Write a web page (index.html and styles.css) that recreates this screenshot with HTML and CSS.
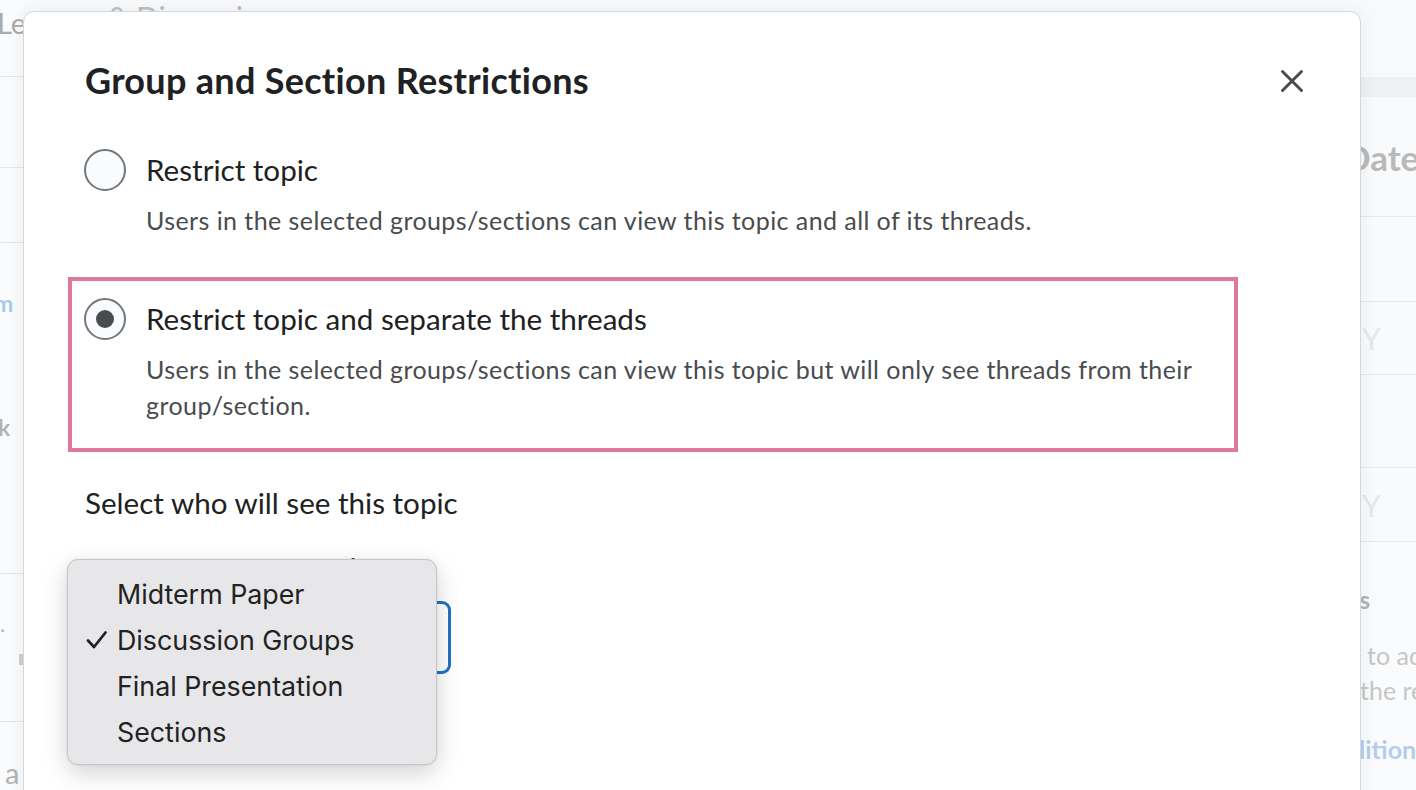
FILE: index.html
```html
<!DOCTYPE html>
<html lang="en">
<head>
<meta charset="utf-8">
<title>Group and Section Restrictions</title>
<link rel="stylesheet" href="styles.css">
</head>
<body>
<div class="page">
  <aside class="side-left">
    <div class="lrow lrow1"><span class="ghost-big">Le</span></div>
    <div class="lrow lrow2"></div>
    <div class="lrow lrow3"></div>
    <div class="lrow lrow4"><span class="ghost-link">m</span><span class="ghost-bold k">k</span></div>
    <div class="lrow lrow5"><span class="ghost-dot">.</span><span class="ghost-bar"></span></div>
    <div class="lrow lrow6"><span class="ghost-big a">a</span></div>
  </aside>
  <main class="page-main">
    <h1 class="ghost-heading">&amp; Discussions</h1>
  </main>
  <aside class="side-right">
    <div class="rtop"></div>
    <div class="rband"></div>
    <div class="rrow rhead"><span class="ghost-date">Date</span></div>
    <div class="rrow r2"></div>
    <div class="rrow r3"><span class="ghost-y">Y</span></div>
    <div class="rrow r4"></div>
    <div class="rrow r5"><span class="ghost-y">Y</span></div>
    <div class="rsection">
      <div class="ghost-sub">ns</div>
      <div class="ghost-p p1">to add</div>
      <div class="ghost-p p2">the re</div>
      <div class="ghost-l">lition</div>
    </div>
  </aside>
</div>

<div class="dialog" role="dialog" aria-labelledby="dlg-title">
  <div class="dialog-header">
    <h2 class="dialog-title" id="dlg-title">Group and Section Restrictions</h2>
    <button class="close-btn" aria-label="Close">
      <svg width="24" height="24" viewBox="0 0 24 24"><path d="M2.5 2.5 L21.5 21.5 M21.5 2.5 L2.5 21.5" stroke="#494c4e" stroke-width="3" stroke-linecap="round" fill="none"/></svg>
    </button>
  </div>
  <div class="options">
    <div class="option">
      <span class="radio"></span>
      <div class="option-body">
        <div class="option-label">Restrict topic</div>
        <div class="option-desc">Users in the selected groups/sections can view this topic and all of its threads.</div>
      </div>
    </div>
    <div class="option option-selected">
      <span class="radio radio-checked"><span class="radio-dot"></span></span>
      <div class="option-body">
        <div class="option-label">Restrict topic and separate the threads</div>
        <div class="option-desc">Users in the selected groups/sections can view this topic but will only see threads from their group/section.</div>
      </div>
    </div>
  </div>
  <p class="select-heading">Select who will see this topic</p>
  <div class="field-label">Group Category or Section</div>
  <div class="select-box"></div>
</div>

<div class="menu" role="listbox">
  <div class="menu-item"><span class="check"></span>Midterm Paper</div>
  <div class="menu-item"><span class="check"><svg width="22" height="20" viewBox="0 0 22 20"><path d="M2 10.5 L8 17 L19.5 2.5" stroke="#222" stroke-width="2.8" fill="none" stroke-linecap="round" stroke-linejoin="round"/></svg></span>Discussion Groups</div>
  <div class="menu-item"><span class="check"></span>Final Presentation</div>
  <div class="menu-item"><span class="check"></span>Sections</div>
</div>
</body>
</html>
```

FILE: styles.css
```css
* { box-sizing: border-box; }
html, body { margin: 0; padding: 0; }
body {
  width: 1416px;
  height: 790px;
  overflow: hidden;
  background: #f8f9fb;
  font-family: Lato, "Open Sans", sans-serif;
  position: relative;
}

/* ---------- faded page behind the dialog ---------- */
.page {
  display: flex;
  height: 790px;
  overflow: hidden;
}
.side-left {
  width: 23px;
  flex: none;
  overflow: hidden;
  background: #fafbfc;
}
.lrow {
  border-bottom: 1px solid #e4e6e9;
  position: relative;
  display: flex;
  flex-direction: column;
}
.lrow1 { height: 77px; }
.lrow2 { height: 91px; }
.lrow3 { height: 75px; }
.lrow4 { height: 331px; }
.lrow5 { height: 148px; }
.lrow6 { height: 68px; border-bottom: none; }
.ghost-big {
  font-size: 29px;
  color: #ababab;
  margin-left: -3px;
  margin-top: 6px;
  line-height: 34px;
}
.ghost-big.a { margin-left: 5px; margin-top: 34px; color: #b3b3b3; }
.ghost-link {
  font-size: 23px;
  font-weight: 700;
  color: #a9c8ec;
  margin-top: 45px;
  margin-left: -6px;
  line-height: 30px;
}
.ghost-bold.k {
  font-size: 23px;
  font-weight: 700;
  color: #b3b3b3;
  margin-top: 94px;
  margin-left: -2px;
  line-height: 30px;
}
.ghost-dot {
  font-size: 22px;
  color: #b8b8b8;
  margin-top: 38px;
  line-height: 24px;
}
.ghost-bar {
  width: 4px;
  height: 11px;
  background: #cfcfcf;
  margin-left: 19px;
  margin-top: 18px;
}

.page-main {
  flex: 1;
  padding-left: 84px;
}
.ghost-heading {
  margin: 0;
  font-size: 30px;
  font-weight: 400;
  color: #bdbdbd;
  line-height: 36px;
  margin-top: -1px;
}

.side-right {
  width: 116px;
  flex: none;
  overflow: hidden;
  display: flex;
  flex-direction: column;
}
.rtop { height: 77px; background: #f8f9fb; }
.rband { height: 20px; background: #eef0f3; }
.rrow {
  border-bottom: 1px solid #e4e6e9;
  display: flex;
  align-items: center;
  background: #f9fafc;
}
.rhead { height: 120px; }
.r2 { height: 85px; }
.r3 { height: 73px; }
.r4 { height: 93px; }
.r5 { height: 74px; }
.ghost-date {
  font-size: 35px;
  font-weight: 700;
  color: #b9b9b9;
  margin-left: 44px;
}
.ghost-y {
  font-size: 30px;
  color: #e6e7e9;
  margin-left: 62px;
}
.rsection {
  flex: 1;
  background: #fafbfc;
  position: relative;
  display: flex;
  flex-direction: column;
}
.ghost-sub {
  font-size: 24px;
  font-weight: 700;
  color: #b3b3b3;
  margin-left: 46px;
  margin-top: 43px;
  line-height: 30px;
}
.ghost-p {
  font-size: 25px;
  color: #c6c6c6;
  line-height: 35px;
  white-space: nowrap;
}
.p1 { margin-left: 67px; margin-top: 23px; }
.p2 { margin-left: 60px; margin-top: 0; }
.ghost-l {
  font-size: 25px;
  font-weight: 700;
  color: #b4cdee;
  margin-left: 59px;
  margin-top: 26px;
  line-height: 30px;
}

/* ---------- dialog ---------- */
.dialog {
  position: absolute;
  left: 23px;
  top: 11px;
  width: 1338px;
  height: 820px;
  background: #ffffff;
  border: 1px solid #d3d8df;
  border-radius: 11px;
  box-shadow: 0 2px 18px rgba(30, 40, 60, 0.07);
  padding: 48px 56px 0 59px;
}
.dialog-header {
  display: flex;
  align-items: center;
  justify-content: space-between;
}
.dialog-title {
  margin: 0 0 0 2px;
  font-size: 36px;
  line-height: 40px;
  font-weight: 700;
  color: #202122;
  letter-spacing: 0.3px;
}
.close-btn {
  width: 24px;
  height: 24px;
  padding: 0;
  border: none;
  background: none;
  display: flex;
  margin-top: 2px;
}

.options {
  margin-top: 28px;
  margin-left: -15px;
  width: 1170px;
  display: flex;
  flex-direction: column;
  gap: 10px;
}
.option {
  display: flex;
  align-items: flex-start;
  gap: 20px;
  border: 4px solid transparent;
  padding: 20px 12px 25px 12px;
}
.option-selected {
  border-color: #de789c;
}
.radio {
  width: 42px;
  height: 42px;
  flex: none;
  border-radius: 50%;
  border: 2px solid #737779;
  background: #f9fbff;
  margin-top: -3px;
  display: flex;
  align-items: center;
  justify-content: center;
}
.radio-dot {
  width: 18px;
  height: 18px;
  border-radius: 50%;
  background: #494c4e;
}
.option-body {
  display: flex;
  flex-direction: column;
  gap: 14px;
}
.option-label {
  font-size: 29.6px;
  line-height: 36px;
  color: #202122;
}
.option-desc {
  font-size: 25px;
  line-height: 36px;
  color: #494c4e;
  letter-spacing: 0.43px;
}

.select-heading {
  margin: 33px 0 0 2px;
  font-size: 29.6px;
  line-height: 36px;
  color: #202122;
}
.field-label {
  margin-top: 31px;
  margin-left: 6px;
  font-size: 25px;
  line-height: 30px;
  font-weight: 700;
  color: #202122;
}
.select-box {
  margin-top: 19px;
  margin-left: 2px;
  width: 366px;
  height: 73px;
  border: 3px solid #2071c4;
  border-radius: 9px;
  background: #fff;
}

/* ---------- native dropdown menu ---------- */
.menu {
  position: absolute;
  left: 67px;
  top: 559px;
  width: 370px;
  height: 206px;
  background: #e7e7e9;
  border: 1px solid #c6c6c9;
  border-radius: 11px;
  box-shadow: 0 8px 24px rgba(0, 0, 0, 0.18), 0 0 2px rgba(0, 0, 0, 0.1);
  padding-top: 11px;
  font-family: Inter, "Noto Sans", sans-serif;
}
.menu-item {
  height: 46px;
  display: flex;
  align-items: center;
  font-size: 26.8px;
  color: #222222;
}
.check {
  width: 49px;
  padding-left: 18px;
  display: flex;
  align-items: center;
}
```
